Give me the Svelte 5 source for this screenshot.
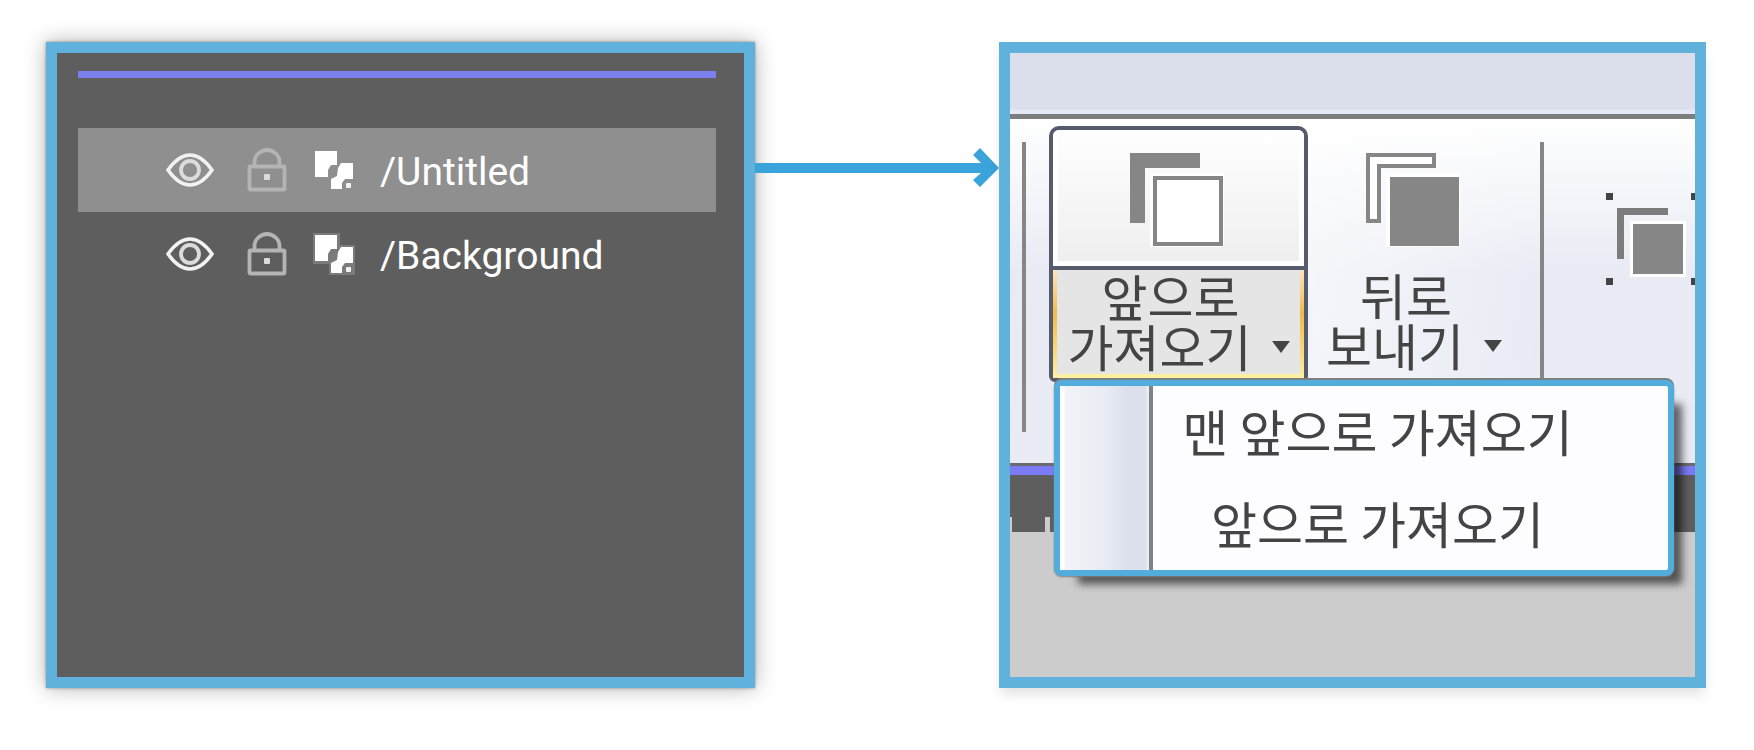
<script>
  const layers = [
    { name: '/Untitled', selected: true },
    { name: '/Background', selected: false }
  ];
  const menuItems = ['맨 앞으로 가져오기', '앞으로 가져오기'];
</script>

<main>
  <section class="panel layers" aria-label="Layers">
    <div class="accent"></div>
    <ul>
      {#each layers as layer}
        <li class:selected={layer.selected}>
          <button class="tool" aria-label="Visibility">
            <svg width="48" height="36" viewBox="0 0 48 36" fill="none" stroke="#f2f2f2">
              <path d="M2 18C9 8 16 3 24 3s15 5 22 15C39 28 32 33 24 33S9 28 2 18Z" stroke-width="3.6" />
              <circle cx="24" cy="18" r="9" stroke-width="3.8" stroke="#dcdcdc" />
            </svg>
          </button>
          <button class="tool" aria-label="Lock">
            <svg width="40" height="44" viewBox="0 0 40 44" fill="none" stroke="#b4b4b4" stroke-width="3.8">
              <rect x="2.500" y="18.500" width="35" height="23" rx="1" />
              <path d="M7.500 18v-4C7.500 7 14 2 20 2S32.500 7 32.500 14v4" />
              <rect x="17" y="26" width="6" height="6" rx="1" fill="#dcdcdc" stroke="none" />
            </svg>
          </button>
          <button class="tool" aria-label="Layer type">
            <svg width="42" height="42" viewBox="0 0 42 42">
              {#if !layer.selected}
                <path d="M0 0h27v12h15v30H16V31H0Z" fill="#909090" opacity=".6" />
              {/if}
              <path d="M2 2h22v14h-6l-3 5v7H2Z" fill="#fff" />
              <path d="M28 14h12v16h-8l-3 4v6H18v-10l6-3 1-8Z" fill="#fff" />
              <rect x="33" y="34" width="5" height="5" rx="1" fill="#f2f2f2" />
            </svg>
          </button>
          <span>{layer.name}</span>
        </li>
      {/each}
    </ul>
  </section>

  <div class="connector" aria-hidden="true">
    <i></i>
    <svg width="26" height="40" viewBox="0 0 26 40">
      <path d="M0 7 7 0 26 20 7 39 0 32 8 25V15Z" fill="#3aa3d9" />
    </svg>
  </div>

  <section class="panel app" aria-label="Arrange">
    <div class="title"></div>
    <div class="ribbon">
      <div class="rule"></div>
      <div class="split open">
        <button class="top" aria-label="앞으로 가져오기">
          <svg width="94" height="94" viewBox="0 0 94 94">
            <path d="M0 0h70v15H15v55H0Z" fill="#868686" />
            <rect x="20" y="20" width="74" height="74" fill="#fff" />
            <rect x="25" y="25" width="66" height="66" fill="#fff" stroke="#868686" stroke-width="4" />
          </svg>
        </button>
        <button class="bottom">
          <span class="first">앞으로</span>
          <span class="second">가져오기<svg class="caret" width="18" height="12" viewBox="0 0 18 12"><path d="M0 0h18L9 12Z" fill="#444" /></svg></span>
        </button>
        <div class="menu" role="menu">
          <div class="gutter"></div>
          <div class="items">
            {#each menuItems as item}
              <button role="menuitem">{item}</button>
            {/each}
          </div>
        </div>
      </div>
      <div class="split">
        <button class="top" aria-label="뒤로 보내기">
          <svg width="94" height="94" viewBox="0 0 94 94">
            <path d="M2 2h66v11H13v55H2Z" fill="#fff" stroke="#868686" stroke-width="4" />
            <rect x="20" y="20" width="74" height="74" fill="#fff" />
            <rect x="24" y="24" width="69" height="69" fill="#868686" />
          </svg>
        </button>
        <button class="bottom">
          <span class="first">뒤로</span>
          <span class="second">보내기<svg class="caret" width="18" height="12" viewBox="0 0 18 12"><path d="M0 0h18L9 12Z" fill="#444" /></svg></span>
        </button>
      </div>
      <div class="rule"></div>
      <button class="group" aria-label="Group">
        <svg width="94" height="94" viewBox="0 0 94 94">
          <path d="M0 0h7v7H0zM85 0h7v7h-7zM0 85h7v7H0zM85 85h7v7h-7z" fill="#444" />
          <path d="M11 15h51v7H18v44h-7Z" fill="#7c7c7c" />
          <rect x="24" y="28" width="56" height="56" fill="#fff" />
          <rect x="27" y="31" width="50" height="50" fill="#868686" />
        </svg>
      </button>
    </div>
    <div class="ruler"></div>
    <div class="canvas"></div>
  </section>
</main>

<style>
  :global(body) {
    margin: 0;
    background: #fff;
  }
  * {
    box-sizing: border-box;
  }
  button {
    display: block;
    margin: 0;
    padding: 0;
    border: 0;
    background: none;
    color: inherit;
    font: inherit;
  }
  svg {
    display: block;
    flex: none;
  }
  main {
    display: grid;
    grid-template-columns: 709fr 244fr 707fr;
    padding: 42px 48px 62px 46px;
  }
  .panel {
    min-width: 0;
    min-height: 646px;
    border: 11px solid #60b2dd;
  }
  .layers {
    padding: 18px 28px 18px 21px;
    background: #5e5e5e;
    color: #fff;
    font: 39px/48px Roboto, sans-serif;
    box-shadow: 0 0 3px rgba(0, 0, 0, .35), 0 0 20px rgba(0, 0, 0, .3);
  }
  .accent {
    height: 7px;
    background: #7c80ee;
  }
  ul {
    margin: 50px 0 0;
    padding: 0;
    list-style: none;
  }
  li {
    display: flex;
    align-items: center;
    height: 84px;
    padding-left: 88px;
  }
  li.selected {
    background: #8f8f8f;
  }
  .tool + .tool {
    margin-left: 33px;
  }
  .tool + .tool + .tool {
    margin-left: 26px;
  }
  li span {
    padding-top: 4px;
    margin-left: 25px;
  }
  .connector {
    display: flex;
    align-items: center;
    height: 252px;
  }
  .connector i {
    flex: 1;
    height: 10px;
    margin-right: -10px;
    background: #3aa3d9;
  }
  .app {
    display: flex;
    flex-direction: column;
    overflow: hidden;
    background: #ccc;
    color: #444;
    font: 400 50px/50px "Noto Sans CJK KR", sans-serif;
    box-shadow: 0 8px 12px -2px rgba(0, 0, 0, .12);
  }
  .title {
    height: 66px;
    border-bottom: 5px solid #7c7f7f;
    background: linear-gradient(#dbdfeb 56px, #e5e8f6 57px);
  }
  .ribbon {
    display: flex;
    align-items: flex-start;
    height: 344px;
    padding: 7px 0 0 12px;
    background: linear-gradient(#fff, #e8ebf4 45%, #e9ecf5);
  }
  .rule {
    flex: none;
    width: 4px;
    height: 290px;
    margin-top: 16px;
    background: #848786;
  }
  .split {
    position: relative;
    flex: none;
    width: 232px;
    padding: 4px 20px 0 0;
    background: linear-gradient(100deg, rgba(255, 255, 255, .6), transparent);
  }
  .split.open {
    width: 259px;
    margin-left: 23px;
    padding: 0;
    border: 4px solid #565b6c;
    border-radius: 10px 10px 6px 6px;
  }
  .top {
    display: flex;
    justify-content: center;
    width: 100%;
    height: 136px;
    padding: 23px 2px 0 0;
  }
  .open .top {
    border: 5px solid #fff;
    border-radius: 6px 6px 0 0;
    padding: 18px 4px 0 0;
    background: linear-gradient(#fefefe, #efefef);
  }
  .bottom {
    width: 100%;
    height: 112px;
    padding-bottom: 6px;
    white-space: nowrap;
  }
  .open .bottom {
    border-top: 4px solid #565b6c;
    padding-bottom: 12px;
    background:
      linear-gradient(#fdf0a0, #fdf0a0) bottom / 100% 4px no-repeat,
      linear-gradient(#fde3bd, #f2bb4c 40%, #fdf0a0) left / 4px 100% no-repeat,
      linear-gradient(#fde3bd, #f2bb4c 40%, #fdf0a0) right / 4px 100% no-repeat,
      #e5e5e5;
  }
  .first,
  .second {
    display: flex;
    align-items: center;
    justify-content: center;
  }
  .first {
    padding-right: 16px;
  }
  .caret {
    margin: 4px 0 0 20px;
  }
  .menu {
    position: absolute;
    z-index: 1;
    top: 250px;
    left: 1px;
    display: flex;
    width: 620px;
    border: 6px solid #52addc;
    border-radius: 8px;
    background: #fdfdff;
    box-shadow: 0 -2px 0 #7c8080, 0 1px 2px #7c8080, 16px 16px 8px -8px rgba(0, 0, 0, .6);
  }
  .gutter {
    width: 93px;
    border-right: 4px solid #808284;
    background: linear-gradient(90deg, #fff 4px, #f3f4f8 5px, #e9ebf4 50%, #dbe0ec 75%, #dbe0ec 85px, #eef0f7);
  }
  .items {
    flex: 1;
    padding-right: 66px;
  }
  .items button {
    width: 100%;
    height: 92px;
    padding-bottom: 4px;
  }
  .group {
    flex: none;
    margin: 67px 0 0 62px;
  }
  .ruler {
    height: 69px;
    border-top: 3px solid #6c6c6c;
    background:
      linear-gradient(#ccc, #ccc) 0 100% / 2px 15px no-repeat,
      linear-gradient(#ccc, #ccc) 35px 100% / 5px 15px no-repeat,
      linear-gradient(#7b7bf5 9px, #5e5e5e 9px);
  }
  .canvas {
    flex: 1;
    background: #ccc;
  }
</style>
